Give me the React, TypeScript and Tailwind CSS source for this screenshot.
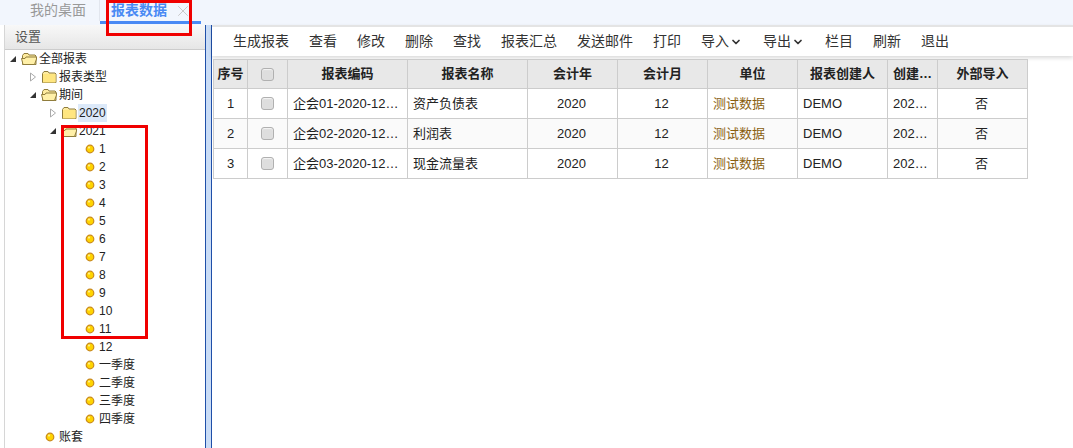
import { ChevronDown, X } from "lucide-react";

const font = { fontFamily: '"Liberation Sans","Noto Sans CJK SC",sans-serif' };

function FolderIcon({ open }: { open?: boolean }) {
  return (
    <svg width="16" height="14" viewBox="0 0 16 14" className="shrink-0">
      <path d="M1.500 12.500V3.500L3 1.500h4l1 1.500h6l1 1v8.500z" fill="#fdeb9f" stroke="#8f7c3c" />
      {open ? (
        <path d="M.5 6.500h3.500l1-1.500h10.500v2l-2 5.500H2z" fill="#fff0a8" stroke="#8f7c3c" />
      ) : (
        <path d="M2 4h12.500v8.500H2z" fill="#ffe680" />
      )}
    </svg>
  );
}

function Bullet() {
  return (
    <svg width="10" height="10" viewBox="0 0 10 10" className="shrink-0">
      <circle cx="5" cy="5" r="3.800" fill="#ffd400" stroke="#c98a1c" strokeWidth="1.200" />
      <circle cx="4" cy="3.600" r="1.100" fill="#ffee88" />
    </svg>
  );
}

function Arrow({ open }: { open?: boolean }) {
  return (
    <svg width="8" height="10" viewBox="0 0 8 10" className="shrink-0">
      {open ? (
        <path d="M7 2v6H1z" fill="#333" />
      ) : (
        <path d="M1.500 1l5 4-5 4z" fill="#fff" stroke="#aaa" />
      )}
    </svg>
  );
}

type Node = {
  label: string;
  depth: number;
  kind: "open" | "closed" | "leaf";
  selected?: boolean;
};

const months = ["1", "2", "3", "4", "5", "6", "7", "8", "9", "10", "11", "12", "一季度", "二季度", "三季度", "四季度"];

const tree: Node[] = [
  { label: "全部报表", depth: 0, kind: "open" },
  { label: "报表类型", depth: 1, kind: "closed" },
  { label: "期间", depth: 1, kind: "open" },
  { label: "2020", depth: 2, kind: "closed", selected: true },
  { label: "2021", depth: 2, kind: "open" },
  ...months.map((m): Node => ({ label: m, depth: 3, kind: "leaf" })),
  { label: "账套", depth: 1, kind: "leaf" },
];

function TreeRow({ node }: { node: Node }) {
  const pad = ["pl-[4px]", "pl-[24px]", "pl-[44px]"][node.depth];
  if (node.kind === "leaf") {
    const leafPad = node.depth === 3 ? "pl-[80px]" : "pl-[40px]";
    return (
      <div className={`flex h-[18px] items-center gap-[4px] ${leafPad}`}>
        <Bullet />
        <span>{node.label}</span>
      </div>
    );
  }
  return (
    <div className={`flex h-[18px] items-center ${pad}`}>
      <Arrow open={node.kind === "open"} />
      <span className="ml-[4px]">
        <FolderIcon open={node.kind === "open"} />
      </span>
      <span className={`ml-[1px] px-[1px] ${node.selected ? "bg-[#dce9f9]" : ""}`}>{node.label}</span>
    </div>
  );
}

const toolbar = [
  { label: "生成报表", w: "w-[76px]" },
  { label: "查看", w: "w-[48px]" },
  { label: "修改", w: "w-[48px]" },
  { label: "删除", w: "w-[48px]" },
  { label: "查找", w: "w-[48px]" },
  { label: "报表汇总", w: "w-[76px]" },
  { label: "发送邮件", w: "w-[76px]" },
  { label: "打印", w: "w-[48px]" },
  { label: "导入", w: "w-[62px]", menu: true },
  { label: "导出", w: "w-[62px]", menu: true },
  { label: "栏目", w: "w-[48px]" },
  { label: "刷新", w: "w-[48px]" },
  { label: "退出", w: "w-[48px]" },
];

const columns = [
  { title: "序号", w: "w-[34px]" },
  { title: "", w: "w-[40px]" },
  { title: "报表编码", w: "w-[120px]" },
  { title: "报表名称", w: "w-[120px]" },
  { title: "会计年", w: "w-[90px]" },
  { title: "会计月", w: "w-[90px]" },
  { title: "单位", w: "w-[90px]" },
  { title: "报表创建人", w: "w-[90px]" },
  { title: "创建…", w: "w-[50px]" },
  { title: "外部导入", w: "w-[90px]" },
];

const rows = [
  { no: "1", code: "企会01-2020-12…", name: "资产负债表" },
  { no: "2", code: "企会02-2020-12…", name: "利润表" },
  { no: "3", code: "企会03-2020-12…", name: "现金流量表" },
];

function Check() {
  return <span className="mx-auto block h-[13px] w-[13px] rounded-[3px] border border-[#b0b0b0] bg-[#dedede] shadow-[inset_0_1px_1px_#f4f4f4]" />;
}

export default function App() {
  return (
    <div style={font} className="relative flex h-[448px] w-[1073px] flex-col overflow-hidden bg-white text-[12px] text-[#222]">
      {/* tabs */}
      <div className="flex h-[25px] shrink-0 bg-[#f2f6fd]">
        <div className="flex h-[21px] w-[100px] items-center border-r border-[#e2e6ee] pl-[30px] text-[14px] text-[#999]">我的桌面</div>
        <div className="flex h-[24px] w-[101px] items-center border-b-[3px] border-[#4a8af4] pl-[11px] text-[14px] font-bold text-[#4a8af4]">
          报表数据
          <X size={18} strokeWidth={1.200} className="ml-[7px] text-[#c4c4c4]" />
        </div>
      </div>

      <div className="flex min-h-0 flex-1">
        {/* left tree */}
        <div className="ml-[4px] w-[201px] shrink-0 border-l border-[#d6d6d6]">
          <div className="flex h-[25px] items-center border-b border-[#ccc] bg-gradient-to-b from-[#f8f8f8] to-[#e6e6e6] pl-[10px] text-[13px] text-[#555]">设置</div>
          <div>
            {tree.map((n) => (
              <TreeRow key={n.label} node={n} />
            ))}
          </div>
        </div>

        {/* splitter */}
        <div className="w-[7px] shrink-0 border-x border-[#1f4fa8] bg-[#c9dcf6]" />

        {/* main */}
        <div className="min-w-0 flex-1">
          <div className="flex h-[31px] items-center border-t-2 border-[#e4e4e4] pl-[21px] text-[14px] text-[#333] shadow-[0_2px_4px_rgba(0,0,0,0.15)]">
            {toolbar.map((t) => (
              <span key={t.label} className={`flex shrink-0 items-center ${t.w}`}>
                {t.label}
                {t.menu && <ChevronDown size={12} strokeWidth={3.500} className="ml-[1px]" />}
              </span>
            ))}
          </div>

          <table className="mt-[3px] ml-[1px] table-fixed border-collapse text-[13px]">
            <thead>
              <tr className="h-[29px] bg-[#e8e8e8] font-bold">
                {columns.map((c, i) => (
                  <th key={i} className={`border border-[#ccc] p-0 text-center text-[13px] font-bold ${c.w}`}>
                    {i === 1 ? <Check /> : c.title}
                  </th>
                ))}
              </tr>
            </thead>
            <tbody>
              {rows.map((r, i) => (
                <tr key={r.no} className={`h-[30px] ${i === 1 ? "bg-[#fafafa]" : ""}`}>
                  <td className="border border-[#ccc] text-center">{r.no}</td>
                  <td className="border border-[#ccc]"><Check /></td>
                  <td className="border border-[#ccc] pl-[5px] whitespace-nowrap">{r.code}</td>
                  <td className="border border-[#ccc] pl-[5px]">{r.name}</td>
                  <td className="border border-[#ccc] pr-[2px] text-center">2020</td>
                  <td className="border border-[#ccc] pr-[2px] text-center">12</td>
                  <td className="border border-[#ccc] pl-[5px] text-[#8a5f10]">测试数据</td>
                  <td className="border border-[#ccc] pl-[5px]">DEMO</td>
                  <td className="border border-[#ccc] pl-[5px]">202…</td>
                  <td className="border border-[#ccc] pr-[2px] text-center">否</td>
                </tr>
              ))}
            </tbody>
          </table>
        </div>
      </div>

      {/* red annotation boxes drawn over the page */}
      <div className="absolute left-[106px] top-0 h-[36px] w-[86px] border-[3px] border-[#f00000]" />
      <div className="absolute left-[61px] top-[125px] h-[214px] w-[87px] border-[3px] border-[#f00000]" />
    </div>
  );
}
